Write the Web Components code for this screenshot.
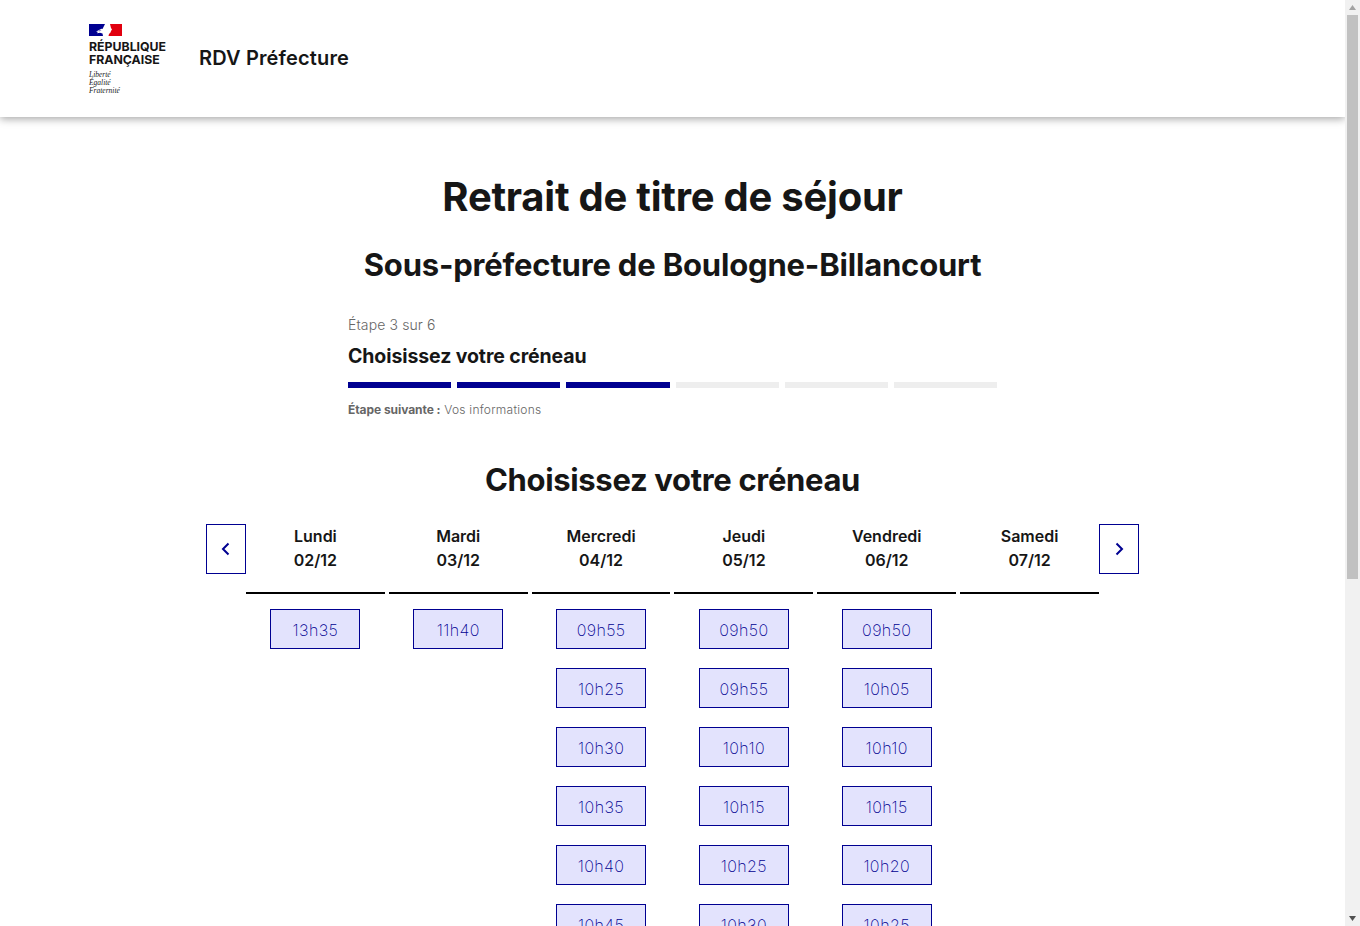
<!DOCTYPE html>
<html lang="fr">
<head>
<meta charset="utf-8">
<title>RDV Préfecture</title>
<style>
  html, body { height: 100%; }
  body { margin: 0; display: flex; overflow: hidden; background: #fff; font-family: Inter, "Liberation Sans", sans-serif; color: #161616; }
  main { flex: 1; min-width: 0; overflow: hidden; }
</style>
</head>
<body>
<main>
  <rdv-header></rdv-header>
  <rdv-page>
    <rdv-stepper current="3" total="6" title="Choisissez votre créneau" next="Vos informations"></rdv-stepper>
    <rdv-calendar></rdv-calendar>
  </rdv-page>
</main>
<rdv-scrollbar></rdv-scrollbar>
<script>
class RdvHeader extends HTMLElement {
  constructor() {
    super();
    this.attachShadow({mode: 'open'}).innerHTML = `
    <style>
      :host { display: flex; align-items: center; height: 117px; padding-left: 89px; box-sizing: border-box;
        background: #fff; box-shadow: 0 2px 8px rgba(0,0,0,.35); position: relative; }
      .logo { display: flex; flex-direction: column; width: 110px; padding-top: 2px; }
      svg { display: block; }
      .rf { font-weight: 700; font-size: 12.3px; line-height: 13px; margin-top: 4px; color: #161616; }
      .devise { font: italic 7.5px/8px "Liberation Serif", serif; margin-top: 5px; color: #222; }
      .name { font-weight: 600; font-size: 20px; letter-spacing: .15px; padding-bottom: 2px; }
    </style>
    <div class="logo">
      <svg width="33" height="12" viewBox="0 0 33 12">
        <path d="M0 0h16l-1.500 3-1 2-1-.2L9 6.500 7 8l2-.2-1 1.500 3-.6 2.500.8.500 2.500H0z" fill="#000091"/>
        <path d="M8.500 7l2.500-1.200 1.500.4-2 1.300z" fill="#8f8fc4"/>
        <path d="M21 0h12v12H19.500l.5-2 1.500-1.500.5-1.500 1-1.500-1-1.500z" fill="#e1000f"/>
      </svg>
      <div class="rf">RÉPUBLIQUE<br>FRANÇAISE</div>
      <div class="devise">Liberté<br>Égalité<br>Fraternité</div>
    </div>
    <div class="name">RDV Préfecture</div>`;
  }
}

class RdvPage extends HTMLElement {
  constructor() {
    super();
    this.attachShadow({mode: 'open'}).innerHTML = `
    <style>
      :host { display: flex; flex-direction: column; align-items: center; padding-top: 56px; }
      h1 { margin: 0; font-size: 40px; line-height: 48px; font-weight: 700; letter-spacing: -0.25px; }
      h2 { margin: 24px 0 0; font-size: 31px; line-height: 40px; font-weight: 700; letter-spacing: -0.18px; }
    </style>
    <h1>Retrait de titre de séjour</h1>
    <h2>Sous-préfecture de Boulogne-Billancourt</h2>
    <slot></slot>`;
  }
}

class RdvStepper extends HTMLElement {
  connectedCallback() {
    const current = +this.getAttribute('current');
    const total = +this.getAttribute('total');
    let bars = '';
    for (let i = 1; i <= total; i++) bars += `<i class="${i <= current ? 'on' : ''}"></i>`;
    this.attachShadow({mode: 'open'}).innerHTML = `
    <style>
      :host { display: block; width: 649px; margin-top: 28px; }
      .count { font-size: 14px; line-height: 24px; font-weight: 300; color: #666; letter-spacing: .12px; }
      .title { font-size: 19.5px; line-height: 28px; font-weight: 700; letter-spacing: -0.1px; margin-top: 5px; }
      .bars { display: flex; gap: 6px; margin-top: 12px; }
      i { flex: 1; height: 6px; background: #eee; }
      i.on { background: #000091; }
      .next { font-size: 12px; line-height: 20px; font-weight: 300; letter-spacing: .25px; color: #666; margin-top: 12px; }
      b { font-weight: 700; letter-spacing: -0.06px; }
    </style>
    <div class="count">Étape ${current} sur ${total}</div>
    <div class="title">${this.getAttribute('title')}</div>
    <div class="bars">${bars}</div>
    <div class="next"><b>Étape suivante :</b> ${this.getAttribute('next')}</div>`;
  }
}

class RdvSlot extends HTMLElement {
  constructor() {
    super();
    this.attachShadow({mode: 'open'}).innerHTML = `
    <style>
      :host { display: flex; align-items: center; justify-content: center; flex: none; width: 90px; height: 40px; box-sizing: border-box;
        padding-top: 2px; border: 1px solid #000091; background: #e3e3fd; color: #000091; font-size: 16px; font-weight: 200; letter-spacing: .4px; }
    </style>
    <slot></slot>`;
  }
}

class RdvDay extends HTMLElement {
  connectedCallback() {
    const times = (this.getAttribute('times') || '').split(' ').filter(Boolean);
    this.attachShadow({mode: 'open'}).innerHTML = `
    <style>
      :host { display: block; flex: 1; min-width: 0; }
      .head { height: 70px; box-sizing: border-box; border-bottom: 2px solid #000; text-align: center;
        font-size: 16px; line-height: 24px; font-weight: 600; }
      .list { display: flex; flex-direction: column; align-items: center; gap: 19px; margin-top: 15px; }
    </style>
    <div class="head">${this.getAttribute('day')}<br>${this.getAttribute('date')}</div>
    <div class="list">${times.map(t => `<rdv-slot>${t}</rdv-slot>`).join('')}</div>`;
  }
}

class RdvArrow extends HTMLElement {
  connectedCallback() {
    const d = this.getAttribute('dir') === 'left' ? 'M9.500 1.500 4 7l5.500 5.500' : 'M4.500 1.500 10 7l-5.500 5.500';
    this.attachShadow({mode: 'open'}).innerHTML = `
    <style>
      :host { display: flex; align-items: center; justify-content: center; flex: none; width: 40px; height: 50px;
        box-sizing: border-box; border: 1px solid #000091; background: #fff; }
    </style>
    <svg width="14" height="14" viewBox="0 0 14 14"><path d="${d}" fill="none" stroke="#000091" stroke-width="2"/></svg>`;
  }
}

class RdvCalendar extends HTMLElement {
  constructor() {
    super();
    this.attachShadow({mode: 'open'}).innerHTML = `
    <style>
      :host { display: block; width: 933px; }
      h3 { margin: 40px 0 24px; text-align: center; font-size: 31px; line-height: 40px; font-weight: 700; letter-spacing: -0.33px; }
      .row { display: flex; align-items: flex-start; }
      .days { display: flex; gap: 4px; flex: 1; min-width: 0; }
    </style>
    <h3>Choisissez votre créneau</h3>
    <div class="row">
      <rdv-arrow dir="left"></rdv-arrow>
      <div class="days">
        <rdv-day day="Lundi" date="02/12" times="13h35"></rdv-day>
        <rdv-day day="Mardi" date="03/12" times="11h40"></rdv-day>
        <rdv-day day="Mercredi" date="04/12" times="09h55 10h25 10h30 10h35 10h40 10h45"></rdv-day>
        <rdv-day day="Jeudi" date="05/12" times="09h50 09h55 10h10 10h15 10h25 10h30"></rdv-day>
        <rdv-day day="Vendredi" date="06/12" times="09h50 10h05 10h10 10h15 10h20 10h25"></rdv-day>
        <rdv-day day="Samedi" date="07/12"></rdv-day>
      </div>
      <rdv-arrow dir="right"></rdv-arrow>
    </div>`;
  }
}

class RdvScrollbar extends HTMLElement {
  constructor() {
    super();
    this.attachShadow({mode: 'open'}).innerHTML = `
    <style>
      :host { display: flex; flex-direction: column; flex: none; width: 15px; height: 100%; background: #f1f1f1; }
      svg { display: block; flex: none; }
      .thumb { height: 564px; margin: 0 2px; background: #c1c1c1; }
      .down { margin-top: auto; }
    </style>
    <svg width="15" height="15" viewBox="0 0 15 15"><path d="M7.500 5 11 10H4z" fill="#a3a3a3"/></svg>
    <div class="thumb"></div>
    <svg class="down" width="15" height="15" viewBox="0 0 15 15"><path d="M7.500 10 4 5h7z" fill="#505050"/></svg>`;
  }
}

customElements.define('rdv-header', RdvHeader);
customElements.define('rdv-page', RdvPage);
customElements.define('rdv-stepper', RdvStepper);
customElements.define('rdv-slot', RdvSlot);
customElements.define('rdv-day', RdvDay);
customElements.define('rdv-arrow', RdvArrow);
customElements.define('rdv-calendar', RdvCalendar);
customElements.define('rdv-scrollbar', RdvScrollbar);
</script>
</body>
</html>
